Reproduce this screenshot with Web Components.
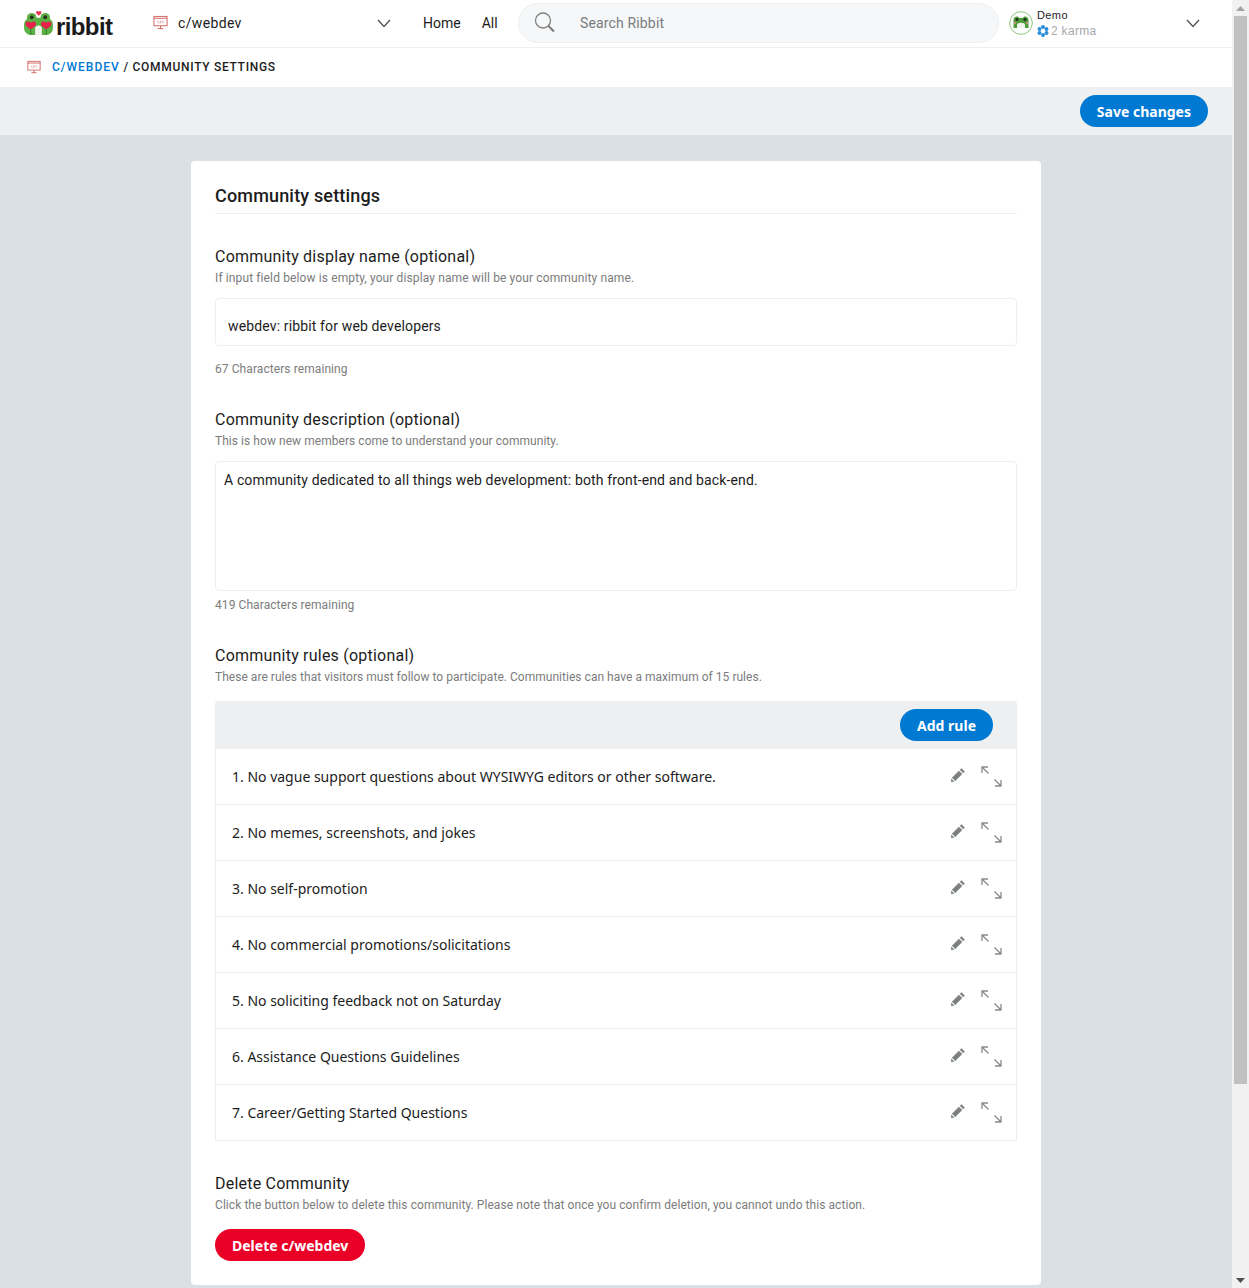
<!DOCTYPE html>
<html lang="en">
<head>
<meta charset="utf-8">
<title>Community settings</title>
<style>
  html, body { margin: 0; height: 100%; overflow: hidden; }
  body { display: flex; background: #dae0e6; color: #1c1c1c; font-family: "Noto Sans", "Open Sans", sans-serif; }
</style>
</head>
<body>
  <ribbit-page>
    <top-nav></top-nav>
    <crumb-bar></crumb-bar>
    <save-bar></save-bar>
    <settings-card></settings-card>
  </ribbit-page>
  <fake-scrollbar></fake-scrollbar>

<script>
const PLEX = 'Roboto, "Noto Sans", sans-serif';

const monitorIcon = (size) => `
  <svg width="${size}" height="${size}" viewBox="0 0 16 16" fill="none" stroke="#d0605e" stroke-width="1">
    <rect x="1" y="1.500" width="14" height="10" fill="#fff"/>
    <path d="M1 3.500h14M5 14.500h6M8 11.500v3"/>
    <path d="M6 6.200 4.900 7.500 6 8.800M10 6.200l1.100 1.300L10 8.800M8.600 6 7.400 9" stroke-width=".7"/>
  </svg>`;

const chevron = `
  <svg width="14" height="9" viewBox="0 0 14 9" fill="none" stroke="#555" stroke-width="1.400">
    <path d="M1 1l6 6.500L13 1"/>
  </svg>`;

const frog = (w, h) => `
  <svg width="${w}" height="${h}" viewBox="0 0 32 26">
    <path d="M13.500 2.700c0-2 2.300-2.200 2.700-.6.400-1.600 2.800-1.400 2.800.6 0 1.500-1.900 2.500-2.700 3.300-.8-.8-2.800-1.800-2.800-3.300z" fill="#e8304f"/>
    <circle cx="9" cy="8" r="5" fill="#5fae45"/>
    <circle cx="23" cy="8" r="5" fill="#5fae45"/>
    <rect x="1" y="8" width="30" height="18" rx="7" fill="#5cb144"/>
    <circle cx="9" cy="7.500" r="2" fill="#24351f"/>
    <circle cx="23" cy="7.500" r="2" fill="#24351f"/>
    <path d="M12.500 26v-7c0-2 1.500-3 3.500-3s3.500 1 3.500 3v7z" fill="#f2f5ee"/>
    <path d="M2.500 14.500c0-3 3.800-3.200 5.500-1.200 1.700-2 5.500-1.800 5.500 1.200 0 2.500-3.800 4.200-5.500 5.700-1.700-1.500-5.500-3.200-5.500-5.700z" fill="#e4224a"/>
    <path d="M18.500 14.500c0-3 3.800-3.200 5.500-1.200 1.700-2 5.500-1.800 5.500 1.200 0 2.500-3.800 4.200-5.500 5.700-1.700-1.500-5.500-3.200-5.500-5.700z" fill="#e4224a"/>
    <path d="M7.500 20v6h1v-6zM23.500 20v6h1v-6z" fill="#2f7a2b"/>
  </svg>`;

const avatar = `
  <svg width="24" height="24" viewBox="0 0 24 24">
    <circle cx="12" cy="12" r="11.300" fill="#fff" stroke="#8cc47c"/>
    <path d="M4.500 17V9.500C4.500 6.500 6 5.500 7.800 5.500c1.200 0 2 .6 2.500 1.500h3.400c.5-.9 1.300-1.500 2.500-1.500 1.800 0 3.300 1 3.300 4V17z" fill="#4f9c3a"/>
    <circle cx="8" cy="8.500" r="1.500" fill="#1f2e1c"/>
    <circle cx="16" cy="8.500" r="1.500" fill="#1f2e1c"/>
    <path d="M8 17v-3c0-1.500 1.800-2.300 4-2.300s4 .8 4 2.300v3z" fill="#f1f4ec"/>
    <circle cx="6" cy="12" r="1" fill="#e98a8a"/>
    <circle cx="18" cy="12" r="1" fill="#e98a8a"/>
  </svg>`;

class RibbitPage extends HTMLElement {
  constructor() {
    super();
    this.attachShadow({ mode: 'open' });
    this.shadowRoot.innerHTML = `
      <style>
        :host { display: block; width: 1232px; flex: none; }
      </style>
      <slot></slot>`;
  }
}

class TopNav extends HTMLElement {
  constructor() {
    super();
    this.attachShadow({ mode: 'open' });
    this.shadowRoot.innerHTML = `
      <style>
        :host {
          display: flex; align-items: center; height: 46px; padding-bottom: 1px; background: #fff;
          border-bottom: 1px solid #edeff1; font: 14px ${PLEX}; color: #1c1c1c;
        }
        .logo { display: flex; align-items: center; width: 153px; padding-left: 23px; box-sizing: border-box; flex: none; }
        .logo svg { margin-top: -2px; }
        .logo span { font: 700 24px/1 "Liberation Sans", sans-serif; color: #1a1a1b; letter-spacing: -.6px; margin-left: 2px; margin-top: 7px; }
        .picker { display: flex; align-items: center; width: 238px; flex: none; box-sizing: border-box; }
        .picker .name { margin-left: 10px; flex: 1; letter-spacing: .35px; }
        .picker .ico { display: flex; margin-top: -2px; }
        .picker .chev { display: flex; }
        .links { margin-left: 32px; width: 95px; flex: none; display: flex; gap: 21px; }
        .search {
          width: 481px; height: 40px; box-sizing: border-box; flex: none; background: #f6f7f8;
          border: 1px solid #edeff1; border-radius: 20px; display: flex; align-items: center;
          padding-left: 14px; color: #787c7e; letter-spacing: .15px;
        }
        .search svg { margin-right: 23px; }
        .user { display: flex; align-items: center; margin-left: 10px; flex: 1; }
        .who { margin-left: 4px; font: 11px/15px "Liberation Sans", sans-serif; color: #1c1c1c; flex: 1; letter-spacing: .4px; }
        .karma { display: flex; align-items: center; gap: 2px; margin-top: 1px; color: #a8aaab; font-size: 12px; letter-spacing: .3px; }
        .user > .chev { display: flex; margin-right: 32px; }
      </style>
      <div class="logo">${frog(31, 25)}<span>ribbit</span></div>
      <div class="picker">
        <span class="ico">${monitorIcon(15)}</span>
        <span class="name">c/webdev</span>
        <span class="chev">${chevron}</span>
      </div>
      <nav class="links"><span>Home</span><span>All</span></nav>
      <div class="search">
        <svg width="24" height="24" viewBox="0 0 24 24" fill="none" stroke="#808080" stroke-width="1.300">
          <circle cx="10" cy="9.500" r="7.500"/>
          <path d="M15.500 15l5.500 5.500" stroke-width="2.200"/>
        </svg>
        <span>Search Ribbit</span>
      </div>
      <div class="user">
        ${avatar}
        <div class="who">
          <div>Demo</div>
          <div class="karma">
            <svg width="12" height="12" viewBox="0 0 12 12" fill="#2a8fd8">
              <circle cx="6" cy="2" r="2"/><circle cx="6" cy="10" r="2"/>
              <circle cx="2.500" cy="4" r="2"/><circle cx="9.500" cy="4" r="2"/>
              <circle cx="2.500" cy="8" r="2"/><circle cx="9.500" cy="8" r="2"/>
              <circle cx="6" cy="6" r="1.200" fill="#fff"/>
            </svg>
            <span>2 karma</span>
          </div>
        </div>
        <span class="chev">${chevron}</span>
      </div>`;
  }
}

class CrumbBar extends HTMLElement {
  constructor() {
    super();
    this.attachShadow({ mode: 'open' });
    this.shadowRoot.innerHTML = `
      <style>
        :host {
          display: flex; align-items: center; height: 38px; padding: 0 0 1px 27px; background: #fff;
          font: 500 12px ${PLEX}; letter-spacing: .7px; color: #1c1c1c; text-transform: uppercase;
        }
        svg { display: block; margin-right: 11px; }
        a { color: #0079d3; text-decoration: none; letter-spacing: 1px; }
      </style>
      ${monitorIcon(14)}
      <span><a href="#">c/webdev</a> / community settings</span>`;
  }
}

class PillButton extends HTMLElement {
  constructor() {
    super();
    this.attachShadow({ mode: 'open' });
    this.shadowRoot.innerHTML = `
      <style>
        :host {
          display: inline-flex; align-items: center; justify-content: center; height: 32px;
          padding: 0 17px; border-radius: 16px; background: var(--pill, #0079d3); color: #fff;
          font: 700 14px "Noto Sans", "Open Sans", sans-serif; box-sizing: border-box;
        }
      </style>
      <slot></slot>`;
  }
}

class SaveBar extends HTMLElement {
  constructor() {
    super();
    this.attachShadow({ mode: 'open' });
    this.shadowRoot.innerHTML = `
      <style>
        :host {
          display: flex; align-items: center; justify-content: flex-end; height: 48px;
          background: #edeff1; padding-right: 24px;
        }
      </style>
      <pill-button>Save changes</pill-button>`;
  }
}

class FieldBlock extends HTMLElement {
  constructor() {
    super();
    this.attachShadow({ mode: 'open' });
    const label = this.getAttribute('label');
    const hint = this.getAttribute('hint');
    this.shadowRoot.innerHTML = `
      <style>
        :host { display: block; margin-top: 31px; }
        .label { padding-top: 2px; font: 400 16px/20px ${PLEX}; color: #1c1c1c; letter-spacing: .22px; }
        .hint { margin-top: 3px; font: 400 12px/16px ${PLEX}; color: #7c7c7c; letter-spacing: var(--hint-ls, .05px); }
        .body { margin-top: var(--gap, 12px); }
      </style>
      <div class="label">${label}</div>
      <div class="hint">${hint}</div>
      <div class="body"><slot></slot></div>`;
  }
}

class TextBox extends HTMLElement {
  constructor() {
    super();
    this.attachShadow({ mode: 'open' });
    const tall = this.hasAttribute('tall');
    this.shadowRoot.innerHTML = `
      <style>
        :host {
          display: flex; box-sizing: border-box; border: 1px solid #edeff1; border-radius: 4px;
          font: 400 14px/18px ${PLEX}; color: #1c1c1c; background: #fff; letter-spacing: .14px;
          ${tall ? 'height: 130px; padding: 9px 8px;' : 'height: 48px; align-items: center; padding: 7px 12px 0;'}
        }
      </style>
      <slot></slot>`;
  }
}

class CountNote extends HTMLElement {
  constructor() {
    super();
    this.attachShadow({ mode: 'open' });
    this.shadowRoot.innerHTML = `
      <style>
        :host { display: block; margin-top: var(--top, 15px); font: 400 12px/16px ${PLEX}; color: #7c7c7c; letter-spacing: .08px; }
      </style>
      <slot></slot>`;
  }
}

class RuleRow extends HTMLElement {
  constructor() {
    super();
    this.attachShadow({ mode: 'open' });
    this.shadowRoot.innerHTML = `
      <style>
        :host {
          display: flex; align-items: center; height: 56px; box-sizing: border-box;
          border-bottom: 1px solid #edeff1; padding: 0 14px 0 16px;
          font: 400 14px/18px "Noto Sans", "Open Sans", sans-serif; color: #1c1c1c;
        }
        .text { flex: 1; }
        .pencil { display: block; margin: -3px 16px 0 0; }
        .expand { display: block; }
      </style>
      <span class="text"><slot></slot></span>
      <svg class="pencil" width="14" height="14" viewBox="0 0 14 14" fill="#7e8183">
        <path d="M10.400.2l3.400 3.400-1.600 1.600-3.400-3.400zM7.900 2.700l3.400 3.400-7 7L.9 9.700zM.3 10.500l3.200 3.200-3.500.3z"/>
      </svg>
      <svg class="expand" width="21" height="21" viewBox="0 0 21 21" fill="none" stroke="#878a8c" stroke-width="1.300">
        <path d="M1 7V1h6M1 1l6.500 6.500"/>
        <path d="M20 14v6h-6M20 20l-6.500-6.500"/>
      </svg>`;
  }
}

class RuleList extends HTMLElement {
  constructor() {
    super();
    this.attachShadow({ mode: 'open' });
    this.shadowRoot.innerHTML = `
      <style>
        :host { display: block; border: solid #edeff1; border-width: 0 1px; border-radius: 4px 4px 0 0; box-sizing: border-box; }
        .head {
          display: flex; align-items: center; justify-content: flex-end; height: 48px;
          margin: 0 -1px; padding-right: 24px; background: #edeff1; border-radius: 4px 4px 0 0;
        }
      </style>
      <div class="head"><pill-button>Add rule</pill-button></div>
      <slot></slot>`;
  }
}

class SettingsCard extends HTMLElement {
  constructor() {
    super();
    this.attachShadow({ mode: 'open' });
    this.shadowRoot.innerHTML = `
      <style>
        :host {
          display: block; width: 850px; box-sizing: border-box; margin: 26px auto 0; padding: 24px;
          background: #fff; border-radius: 4px; color: #1c1c1c;
        }
        h1 {
          margin: 0; padding-bottom: 6px; font: 500 18px/22px ${PLEX}; letter-spacing: .17px;
          border-bottom: 1px solid #edeff1;
        }
      </style>
      <h1>Community settings</h1>
      <field-block style="--hint-ls:.12px" label="Community display name (optional)" hint="If input field below is empty, your display name will be your community name.">
        <text-box>webdev: ribbit for web developers</text-box>
        <count-note>67 Characters remaining</count-note>
      </field-block>
      <field-block label="Community description (optional)" hint="This is how new members come to understand your community.">
        <text-box tall>A community dedicated to all things web development: both front-end and back-end.</text-box>
        <count-note style="--top:6px">419 Characters remaining</count-note>
      </field-block>
      <field-block style="--gap:16px;--hint-ls:.03px" label="Community rules (optional)" hint="These are rules that visitors must follow to participate. Communities can have a maximum of 15 rules.">
        <rule-list>
          <rule-row>1. No vague support questions about WYSIWYG editors or other software.</rule-row>
          <rule-row>2. No memes, screenshots, and jokes</rule-row>
          <rule-row>3. No self-promotion</rule-row>
          <rule-row>4. No commercial promotions/solicitations</rule-row>
          <rule-row>5. No soliciting feedback not on Saturday</rule-row>
          <rule-row>6. Assistance Questions Guidelines</rule-row>
          <rule-row>7. Career/Getting Started Questions</rule-row>
        </rule-list>
      </field-block>
      <field-block style="--gap:16px;--hint-ls:.065px" label="Delete Community" hint="Click the button below to delete this community. Please note that once you confirm deletion, you cannot undo this action.">
        <pill-button style="--pill:#ea0027">Delete c/webdev</pill-button>
      </field-block>`;
  }
}

class FakeScrollbar extends HTMLElement {
  constructor() {
    super();
    this.attachShadow({ mode: 'open' });
    this.shadowRoot.innerHTML = `
      <style>
        :host { display: flex; flex-direction: column; width: 17px; flex: none; height: 1288px; background: #f1f1f1; align-items: center; box-sizing: border-box; }
        .arrow { height: 16px; flex: none; display: flex; align-items: center; justify-content: center; }
        .track { flex: 1; width: 100%; }
        .thumb { width: 13px; height: 1068px; margin-left: 2px; background: #c1c1c1; }
      </style>
      <div class="arrow"><svg width="9" height="5" viewBox="0 0 9 5"><path d="M4.500 0 9 5H0z" fill="#a3a3a3"/></svg></div>
      <div class="track"><div class="thumb"></div></div>
      <div class="arrow"><svg width="9" height="5" viewBox="0 0 9 5"><path d="M0 0h9L4.500 5z" fill="#505050"/></svg></div>`;
  }
}

customElements.define('ribbit-page', RibbitPage);
customElements.define('top-nav', TopNav);
customElements.define('crumb-bar', CrumbBar);
customElements.define('pill-button', PillButton);
customElements.define('save-bar', SaveBar);
customElements.define('field-block', FieldBlock);
customElements.define('text-box', TextBox);
customElements.define('count-note', CountNote);
customElements.define('rule-row', RuleRow);
customElements.define('rule-list', RuleList);
customElements.define('settings-card', SettingsCard);
customElements.define('fake-scrollbar', FakeScrollbar);
</script>
</body>
</html>
